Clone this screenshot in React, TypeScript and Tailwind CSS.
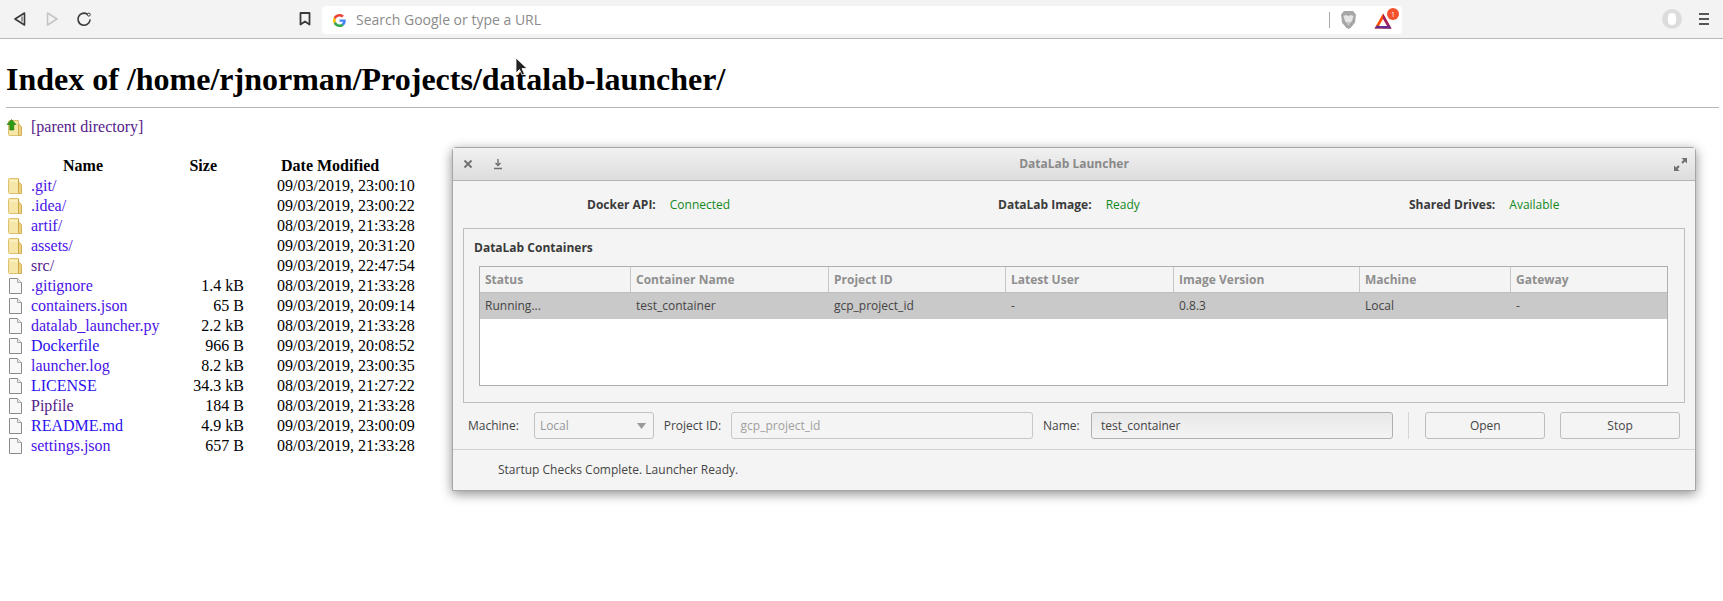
const listing = [
  { name: ".git/", size: "", date: "09/03/2019, 23:00:10", dir: true, color: "text-[#4a12e8]" },
  { name: ".idea/", size: "", date: "09/03/2019, 23:00:22", dir: true, color: "text-[#4a12e8]" },
  { name: "artif/", size: "", date: "08/03/2019, 21:33:28", dir: true, color: "text-[#4a12e8]" },
  { name: "assets/", size: "", date: "09/03/2019, 20:31:20", dir: true, color: "text-[#4a12e8]" },
  { name: "src/", size: "", date: "09/03/2019, 22:47:54", dir: true, color: "text-[#551a8b]" },
  { name: ".gitignore", size: "1.4 kB", date: "08/03/2019, 21:33:28", dir: false, color: "text-[#4a12e8]" },
  { name: "containers.json", size: "65 B", date: "09/03/2019, 20:09:14", dir: false, color: "text-[#4a12e8]" },
  { name: "datalab_launcher.py", size: "2.2 kB", date: "08/03/2019, 21:33:28", dir: false, color: "text-[#4a12e8]" },
  { name: "Dockerfile", size: "966 B", date: "09/03/2019, 20:08:52", dir: false, color: "text-[#2a10ee]" },
  { name: "launcher.log", size: "8.2 kB", date: "09/03/2019, 23:00:35", dir: false, color: "text-[#4a12e8]" },
  { name: "LICENSE", size: "34.3 kB", date: "08/03/2019, 21:27:22", dir: false, color: "text-[#2a10ee]" },
  { name: "Pipfile", size: "184 B", date: "08/03/2019, 21:33:28", dir: false, color: "text-[#551a8b]" },
  { name: "README.md", size: "4.9 kB", date: "09/03/2019, 23:00:09", dir: false, color: "text-[#2a10ee]" },
  { name: "settings.json", size: "657 B", date: "08/03/2019, 21:33:28", dir: false, color: "text-[#4a12e8]" },
];

const columns = [
  { title: "Status", value: "Running...", width: "w-[151px]" },
  { title: "Container Name", value: "test_container", width: "w-[198px]" },
  { title: "Project ID", value: "gcp_project_id", width: "w-[177px]" },
  { title: "Latest User", value: "-", width: "w-[168px]" },
  { title: "Image Version", value: "0.8.3", width: "w-[186px]" },
  { title: "Machine", value: "Local", width: "w-[151px]" },
  { title: "Gateway", value: "-", width: "flex-1" },
];

function FolderIcon() {
  return (
    <svg width="16" height="16" viewBox="0 0 16 16" className="shrink-0">
      <path d="M2.500 1.500Q2.500 0.500 3.500 0.500H12.500V15.500H3.500Q2.500 15.500 2.500 14.500Z" fill="#f6e6a8" stroke="#dcc070" strokeWidth="1" />
      <path d="M12.500 4.500H13.500L15.500 7V15.500H12.500Z" fill="#efd27c" stroke="#d2ae58" strokeWidth="1" />
      <path d="M4 3h7" stroke="#fdf6d6" strokeWidth="1" />
      <path d="M12.500 1v14" stroke="#c9a850" strokeWidth="1" />
    </svg>
  );
}

function FileIcon() {
  return (
    <svg width="16" height="16" viewBox="0 0 16 16" className="shrink-0">
      <path d="M3.500 0.500h8l4 4v11h-12Z" fill="#f8f8f8" stroke="#8a8a8a" strokeWidth="1" />
      <path d="M11.500 0.500v4h4" fill="#e8e8e8" stroke="#9a9a9a" strokeWidth="0.8" />
    </svg>
  );
}

function ParentIcon() {
  return (
    <svg width="16" height="17" viewBox="0 0 16 17" className="shrink-0">
      <path d="M2.500 3.500Q2.500 1.500 3.500 1.500H12.500V16.500H3.500Q2.500 16.500 2.500 15.500Z" fill="#f6e6a8" stroke="#dcc070" strokeWidth="1" />
      <path d="M12.500 5.500H13.500L15.500 8V16.500H12.500Z" fill="#efd27c" stroke="#d2ae58" strokeWidth="1" />
      <path d="M5.500 0.500 10 5.500H7.800V11H3.800V5.500H1Z" fill="#2c9a12" stroke="#1f7a0b" strokeWidth="0.6" />
    </svg>
  );
}

function BrowserBar() {
  return (
    <header className="flex h-[39px] items-start border-b border-[#b9b9b9] bg-[#f3f3f3]">
      <div className="flex h-[38px] w-[322px] items-center">
        <svg width="14" height="16" viewBox="0 0 14 16" className="ml-[13px]" fill="none" stroke="#3a3a3a" strokeWidth="1.6" strokeLinejoin="round">
          <path d="M11.500 2 2 8l9.500 6Z" />
          <path d="M9 5.500v5" strokeWidth="1" />
        </svg>
        <svg width="14" height="16" viewBox="0 0 14 16" className="ml-[18px]" fill="none" stroke="#c4c4c4" strokeWidth="1.500" strokeLinejoin="round">
          <path d="M2.500 2 12 8l-9.500 6Z" />
        </svg>
        <svg width="16" height="16" viewBox="0 0 16 16" className="ml-[17px]" fill="none" stroke="#3a3a3a" strokeWidth="1.600">
          <path d="M11 3A6 6 0 1 0 14 9" strokeLinecap="round" strokeDasharray="6 0.800" />
          <circle cx="12.800" cy="3.600" r="1.500" strokeWidth="1" />
        </svg>
        <svg width="12" height="14" viewBox="0 0 12 14" className="ml-[207px]" fill="none" stroke="#3a3a3a" strokeWidth="1.800" strokeLinejoin="round">
          <path d="M1.500 1h9v11.500L6 9.500l-4.500 3Z" />
        </svg>
      </div>
      <div className="mt-[6px] flex h-[28px] w-[1080px] items-center rounded-[4px] bg-white pl-[11px]">
        <svg width="13" height="13" viewBox="0 0 48 48">
          <path fill="#ea4335" d="M24 9.500c3.500 0 6.700 1.200 9.200 3.600l6.900-6.900C35.900 2.400 30.500 0 24 0 14.600 0 6.500 5.400 2.600 13.200l8 6.200C12.500 13.600 17.800 9.500 24 9.500Z" />
          <path fill="#4285f4" d="M47 24.500c0-1.600-.1-3.100-.4-4.500H24v9h12.900c-.6 3-2.200 5.500-4.700 7.200l7.700 6C44.400 38 47 31.800 47 24.500Z" />
          <path fill="#fbbc05" d="M10.500 28.600c-.5-1.400-.8-3-.8-4.600s.3-3.200.8-4.600l-8-6.200C.9 16.500 0 20.100 0 24s.9 7.500 2.600 10.800Z" />
          <path fill="#34a853" d="M24 48c6.500 0 11.900-2.100 15.900-5.800l-7.700-6c-2.200 1.400-4.900 2.300-8.200 2.300-6.200 0-11.500-4.200-13.400-9.800l-8 6.200C6.500 42.600 14.600 48 24 48Z" />
        </svg>
        <span className="ml-[10px] -mt-px font-['Open_Sans',sans-serif] text-[14px] text-[#8b8b8b]">Search Google or type a URL</span>
        <div className="ml-auto flex items-center">
          <div className="h-[16px] w-px bg-[#aaaaaa]" />
          <svg width="17" height="20" viewBox="0 0 17 20" className="ml-[10px]">
            <path d="M4 1h9l3 3.500-1 8-4 5-2.500 1.500L6 17.500l-4-5-1-8Z" fill="#a6a6a6" />
            <path d="M3.500 6 6 5l2.500 1L11 5l2.500 1-1.500 5-2 2-1.500 2.500L7 13l-2-2Z" fill="#e6e6e6" />
            <path d="M7 12.500h3L8.500 14Z" fill="#a6a6a6" />
          </svg>
          <div className="relative ml-[17px] mr-[8px] h-[20px] w-[20px]">
            <svg width="18" height="16" viewBox="0 0 18 16" className="absolute left-0 top-[3px]">
              <path d="M9 0.500 17.500 15.500H0.500Z" fill="#ff5000" />
              <path d="M9 0.500 17.500 15.500H9L13 13 9 6Z" fill="#9e1f63" />
              <path d="M0.500 15.500h17L15.500 12.800h-13Z" fill="#662d91" />
              <path d="M9 6 13 13H5Z" fill="#ffffff" />
            </svg>
            <div className="absolute left-[13px] top-[-2px] flex h-[12px] w-[12px] items-center justify-center rounded-full bg-[#f4522d] font-['Open_Sans',sans-serif] text-[7px] leading-none text-white">1</div>
          </div>
        </div>
      </div>
      <div className="flex h-[38px] flex-1 items-center justify-end">
        <div className="flex h-[20px] w-[20px] items-center justify-center rounded-full bg-[#dcdcdc]">
          <div className="h-[12px] w-[8px] rounded-full bg-white" />
        </div>
        <div className="ml-[17px] mr-[14px] flex w-[10px] flex-col gap-[3px]">
          <div className="h-[2px] bg-[#555555]" />
          <div className="h-[2px] bg-[#555555]" />
          <div className="h-[2px] bg-[#555555]" />
        </div>
      </div>
    </header>
  );
}

function DirectoryListing() {
  return (
    <main className="pl-[6px] pr-[4px] font-['Liberation_Serif',serif] text-[16px] text-black">
      <h1 className="pt-[22px] text-[32px] font-bold leading-[37px]">Index of /home/rjnorman/Projects/datalab-launcher/</h1>
      <hr className="mt-[9px] border-t border-[#b5b5b5]" />
      <div className="mt-[9px] flex h-[20px] items-center">
        <ParentIcon />
        <a className="ml-[9px] text-[#551a8b]">[parent directory]</a>
      </div>
      <div className="mt-[19px] w-[420px]">
        <div className="flex h-[20px] items-center font-bold">
          <div className="w-[154px] text-center">Name</div>
          <div className="w-[84px] text-right pr-[27px]">Size</div>
          <div className="pl-[37px]">Date Modified</div>
        </div>
        {listing.map((row) => (
          <div key={row.name} className="flex h-[20px] items-center">
            <div className="flex w-[154px] items-center">
              {row.dir ? <FolderIcon /> : <FileIcon />}
              <a className={`ml-[9px] whitespace-nowrap ${row.color}`}>{row.name}</a>
            </div>
            <div className="w-[84px] text-right">{row.size}</div>
            <div className="pl-[33px] whitespace-nowrap">{row.date}</div>
          </div>
        ))}
      </div>
    </main>
  );
}

function StatusItem({ label, value, className }: { label: string; value: string; className: string }) {
  return (
    <div className={`absolute top-0 flex h-full items-center gap-[14px] ${className}`}>
      <span className="font-bold text-[#3a3a3a]">{label}</span>
      <span className="text-[#13891c]">{value}</span>
    </div>
  );
}

function LauncherWindow() {
  return (
    <section className="absolute left-[452px] top-[147px] flex h-[344px] w-[1244px] flex-col rounded-t-[4px] border border-[#a6a6a6] bg-[#f4f4f4] font-['Open_Sans',sans-serif] text-[12px] text-[#444444] shadow-[0_3px_12px_rgba(0,0,0,0.45)]">
      <div className="relative flex h-[33px] items-center justify-center border-b border-[#b4b4b4] bg-gradient-to-b from-[#f1f1f1] to-[#dddddd]">
        <svg width="10" height="10" viewBox="0 0 10 10" className="absolute left-[10px] top-[11px]" stroke="#707070" strokeWidth="1.800">
          <path d="M1.500 1.500l7 7M8.500 1.500l-7 7" />
        </svg>
        <svg width="10" height="11" viewBox="0 0 10 11" className="absolute left-[40px] top-[11px]" fill="none" stroke="#707070" strokeWidth="1.400">
          <path d="M5 0v6M2.500 4 5 6.500 7.500 4M1 9.500h8" />
        </svg>
        <span className="font-bold text-[#8a8a8a]">DataLab Launcher</span>
        <svg width="13" height="13" viewBox="0 0 13 13" className="absolute right-[8px] top-[10px]" fill="#707070">
          <path d="M7.500 0H13v5.500L11 3.500 8.800 5.700 7.300 4.200 9.500 2ZM0 7.500 2 9.500 4.200 7.300 5.700 8.800 3.500 11 5.500 13H0Z" />
        </svg>
      </div>

      <div className="relative h-[47px]">
        <StatusItem label="Docker API:" value="Connected" className="left-[134px]" />
        <StatusItem label="DataLab Image:" value="Ready" className="left-[545px]" />
        <StatusItem label="Shared Drives:" value="Available" className="left-[956px]" />
      </div>

      <div className="mx-[10px] flex h-[175px] flex-col border border-[#bdbdbd] pl-[15px] pr-[16px]">
        <div className="flex h-[37px] items-center -ml-[5px] font-bold text-[#3a3a3a]">DataLab Containers</div>
        <div className="h-[120px] border border-[#aeaeae] bg-white">
          <div className="flex h-[26px] border-b border-[#bdbdbd] bg-[#f4f4f4] font-bold text-[#8f8f8f]">
            {columns.map((col, i) => (
              <div key={col.title} className={`flex items-center pl-[5px] ${col.width} ${i < columns.length - 1 ? "border-r border-[#c8c8c8]" : ""}`}>
                {col.title}
              </div>
            ))}
          </div>
          <div className="flex h-[26px] bg-[#c9c9c9]">
            {columns.map((col) => (
              <div key={col.title} className={`flex items-center pl-[5px] ${col.width}`}>
                {col.value}
              </div>
            ))}
          </div>
        </div>
      </div>

      <div className="ml-[15px] mr-[15px] mt-[9px] flex h-[27px] items-stretch">
        <div className="flex w-[66px] items-center">Machine:</div>
        <div className="flex w-[120px] items-center justify-between rounded-[3px] border border-[#c2c2c2] pl-[5px] pr-[7px] text-[#999999]">
          Local
          <svg width="9" height="6" viewBox="0 0 9 6" fill="#9a9a9a">
            <path d="M0 0h9L4.500 6Z" />
          </svg>
        </div>
        <div className="ml-[10px] flex w-[67px] items-center">Project ID:</div>
        <div className="flex w-[303px] items-center rounded-[3px] border border-[#c8c8c8] pl-[9px] text-[#a0a0a0]">gcp_project_id</div>
        <div className="ml-[10px] flex w-[48px] items-center">Name:</div>
        <div className="flex w-[303px] items-center rounded-[3px] border border-[#b0b0b0] bg-gradient-to-b from-[#e8e8e8] to-[#f4f4f4] pl-[9px]">test_container</div>
        <div className="ml-[15px] w-px bg-[#d6d6d6]" />
        <button className="ml-[16px] w-[120px] rounded-[3px] border border-[#bdbdbd] bg-[#f4f4f4]">Open</button>
        <button className="ml-[15px] w-[120px] rounded-[3px] border border-[#bdbdbd] bg-[#f4f4f4]">Stop</button>
      </div>

      <div className="mt-[10px] flex flex-1 items-center border-t border-[#d2d2d2] pl-[45px]">Startup Checks Complete. Launcher Ready.</div>
    </section>
  );
}

export default function App() {
  return (
    <div className="relative h-[601px] overflow-hidden bg-white">
      <BrowserBar />
      <DirectoryListing />
      <LauncherWindow />
      {/* mouse pointer over the page */}
      <svg width="13" height="20" viewBox="0 0 13 20" className="absolute left-[515px] top-[57px]">
        <path d="M1 1v15l3.500-3.500L7 18l2.500-1-2.500-5.500h5Z" fill="#222222" stroke="#ffffff" strokeWidth="0.800" />
      </svg>
    </div>
  );
}
